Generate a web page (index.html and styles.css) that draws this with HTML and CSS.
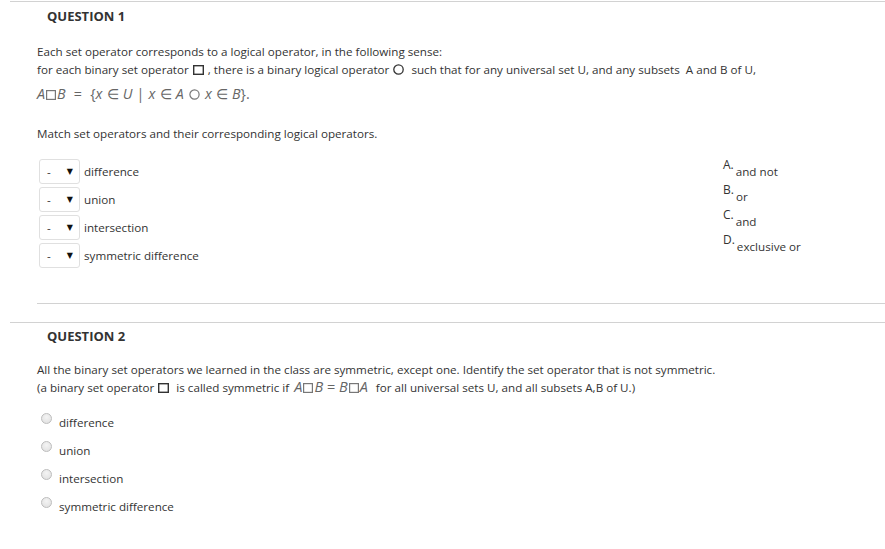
FILE: index.html
```html
<!DOCTYPE html>
<html>
<head>
<meta charset="utf-8">
<link rel="stylesheet" href="styles.css">
</head>
<body>
<section class="question q1">
  <h2 class="q-title">QUESTION 1</h2>
  <div class="q-body">
    <p class="text">Each set operator corresponds to a logical operator, in the following sense:<br>for each binary set operator <svg class="op sq" width="11" height="10" viewBox="0 0 11 10"><rect x="0.7" y="0.7" width="9.6" height="8.6" fill="none" stroke="#333" stroke-width="1.4"/></svg> , there is a binary logical operator <svg class="op circ" width="11" height="11" viewBox="0 0 11 11"><circle cx="5.5" cy="5.5" r="4.7" fill="none" stroke="#333" stroke-width="1.3"/></svg>&nbsp; such that for any universal set U, and any subsets&nbsp; A and B of U,</p>
    <p class="formula"><i>A</i><svg class="fop" width="10" height="10" viewBox="0 0 10 10"><rect x="0.6" y="0.6" width="8.8" height="8.8" fill="none" stroke="#777" stroke-width="1.2"/></svg><i>B</i> &nbsp;= &nbsp;{<i>x</i> ∈ <i>U</i> | <i>x</i> ∈ <i>A</i> <svg class="fop" width="11" height="11" viewBox="0 0 11 11"><circle cx="5.5" cy="5.5" r="4.6" fill="none" stroke="#777" stroke-width="1.2"/></svg> <i>x</i> ∈ <i>B</i>}.</p>
    <p class="text instr">Match set operators and their corresponding logical operators.</p>
    <div class="match">
      <ul class="pairs">
        <li class="pair"><span class="select"><span class="dash">-</span><span class="arrow">▼</span></span><span class="pair-label">difference</span></li>
        <li class="pair"><span class="select"><span class="dash">-</span><span class="arrow">▼</span></span><span class="pair-label">union</span></li>
        <li class="pair"><span class="select"><span class="dash">-</span><span class="arrow">▼</span></span><span class="pair-label">intersection</span></li>
        <li class="pair"><span class="select"><span class="dash">-</span><span class="arrow">▼</span></span><span class="pair-label">symmetric difference</span></li>
      </ul>
      <ol class="answers">
        <li class="answer"><span class="letter">A.</span><span class="answer-text">and not</span></li>
        <li class="answer"><span class="letter">B.</span><span class="answer-text">or</span></li>
        <li class="answer"><span class="letter">C.</span><span class="answer-text">and</span></li>
        <li class="answer"><span class="letter">D.</span><span class="answer-text">exclusive or</span></li>
      </ol>
    </div>
    <hr class="sep">
  </div>
</section>
<section class="question q2">
  <h2 class="q-title">QUESTION 2</h2>
  <div class="q-body">
    <p class="text">All the binary set operators we learned in the class are symmetric, except one. Identify the set operator that is not symmetric.<br>(a binary set operator <svg class="op sq" width="11" height="10" viewBox="0 0 11 10"><rect x="0.7" y="0.7" width="9.6" height="8.6" fill="none" stroke="#333" stroke-width="1.4"/></svg>&nbsp; is called symmetric if <span class="fin"><i>A</i><svg class="fop" width="10" height="10" viewBox="0 0 10 10"><rect x="0.6" y="0.6" width="8.8" height="8.8" fill="none" stroke="#777" stroke-width="1.2"/></svg><i>B</i> = <i>B</i><svg class="fop" width="10" height="10" viewBox="0 0 10 10"><rect x="0.6" y="0.6" width="8.8" height="8.8" fill="none" stroke="#777" stroke-width="1.2"/></svg><i>A</i></span>&nbsp; for all universal sets U, and all subsets A,B of U.)</p>
    <ul class="choices">
      <li class="choice"><span class="radio"></span><span class="choice-label">difference</span></li>
      <li class="choice"><span class="radio"></span><span class="choice-label">union</span></li>
      <li class="choice"><span class="radio"></span><span class="choice-label">intersection</span></li>
      <li class="choice"><span class="radio"></span><span class="choice-label">symmetric difference</span></li>
    </ul>
  </div>
</section>
</body>
</html>
```
FILE: styles.css
```css
html, body {
  margin: 0;
  padding: 0;
  background: #fff;
}
body {
  padding-top: 1px;
  font-family: "Open Sans", "Noto Sans", sans-serif;
  font-size: 11.65px;
  color: #333;
}
.question {
  margin-left: 10px;
  border-top: 1px solid #d2d2d2;
}
.q-title {
  margin: 0;
  padding: 6px 0 0 37px;
  font-size: 13px;
  line-height: 16px;
  font-weight: 700;
  color: #333;
}
.q-body {
  padding-left: 27px;
}
.text {
  margin: 0;
  line-height: 18px;
}
.q1 .q-body > .text:first-child {
  margin-top: 19px;
}
.op {
  vertical-align: -1px;
  margin: 0 1px;
}
.formula {
  margin: 5px 0 0;
  font-family: "Open Sans", sans-serif;
  font-size: 14.3px;
  line-height: 20px;
  color: #666;
  word-spacing: 0.4px;
}
.formula i, .fin i {
  font-style: italic;
}
.fop {
  vertical-align: -1px;
  margin: 0 1px;
}
.fin {
  font-size: 14.5px;
  color: #666;
  line-height: 14px;
  margin: 0 2px;
}
.instr {
  margin-top: 21px;
}
.match {
  display: flex;
  margin-top: 16px;
}
.pairs {
  list-style: none;
  margin: 0;
  padding: 0 0 0 2px;
  flex: 1;
}
.pair {
  display: flex;
  align-items: center;
  height: 25px;
  margin-bottom: 3px;
}
.select {
  box-sizing: border-box;
  width: 41px;
  height: 25px;
  border: 1px solid #e0e0e0;
  border-radius: 3px;
  display: flex;
  align-items: center;
  padding-left: 7px;
  margin-right: 4px;
  background: #fff;
}
.dash {
  flex: 1;
  line-height: 15px;
}
.arrow {
  font-family: "DejaVu Sans", sans-serif;
  font-size: 8px;
  margin-right: 6px;
  color: #111;
}
.pair-label {
  line-height: 15px;
}
.answers {
  list-style: none;
  margin: -1px 0 0;
  padding: 0;
  width: 162px;
}
.answer {
  display: flex;
  align-items: flex-start;
  height: 25px;
}
.letter {
  font-size: 12px;
  line-height: 14px;
  margin-right: 2px;
}
.answer-text {
  line-height: 14px;
  margin-top: 7px;
}
.sep {
  margin: 32px 0 0;
  border: 0;
  border-top: 1px solid #d2d2d2;
  height: 0;
}
.q2 {
  margin-top: 18px;
}
.q2 .q-title {
  padding-top: 5px;
}
.q2 .q-body > .text:first-child {
  margin-top: 17px;
}
.choices {
  list-style: none;
  margin: 16px 0 0;
  padding: 0 0 0 4px;
}
.choice {
  display: flex;
  align-items: flex-start;
  height: 18px;
  margin-bottom: 10px;
}
.radio {
  box-sizing: border-box;
  width: 11px;
  height: 11px;
  border-radius: 50%;
  border: 1px solid #bdbdbd;
  background: radial-gradient(circle at 50% 35%, #f4f4f4 0%, #dedede 100%);
  margin-right: 7px;
}
.choice-label {
  line-height: 18px;
  margin-top: 1px;
}
```
